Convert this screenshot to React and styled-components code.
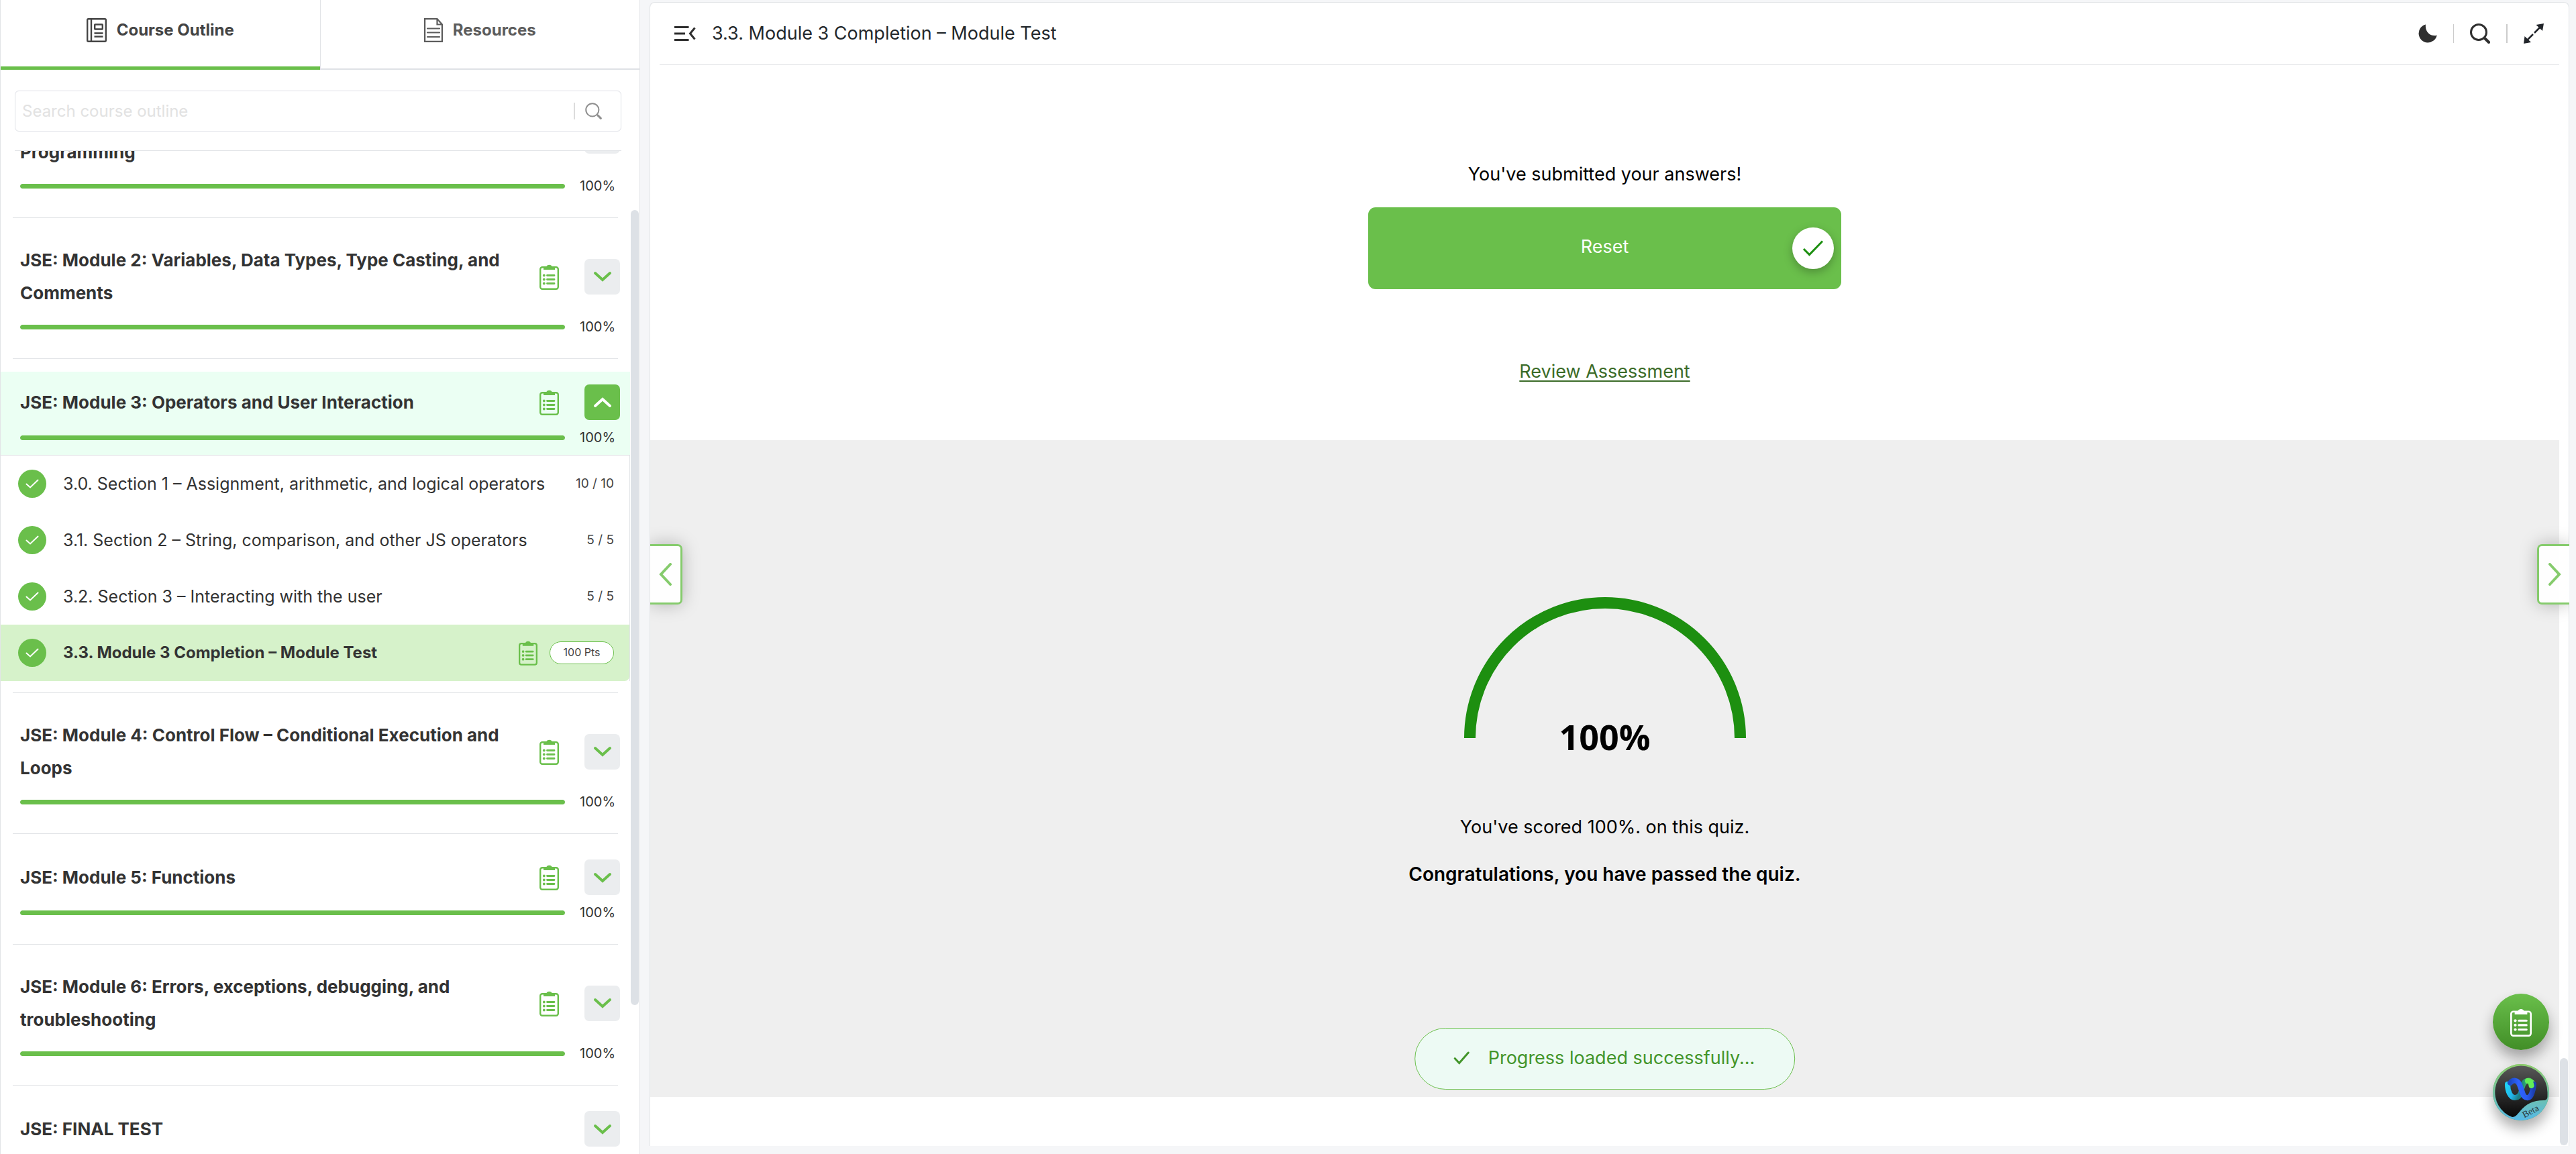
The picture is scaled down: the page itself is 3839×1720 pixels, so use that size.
import React, { useLayoutEffect, useRef } from 'react';
import styled, { createGlobalStyle } from 'styled-components';

const green = '#6abf4b';
const line = '#e2e4e7';

const GlobalStyle = createGlobalStyle`
  *, *::before, *::after { box-sizing: border-box; }
  body {
    margin: 0;
    background: #f5f6f8;
    color: #333333;
    font-family: Inter, "Liberation Sans", sans-serif;
    font-size: 24px;
  }
  button, input { font: inherit; color: inherit; }
  button { border: 0; padding: 0; background: none; cursor: pointer; }
  svg { display: block; flex: none; }
  h1, h2, p, ul { margin: 0; padding: 0; }
  ul { list-style: none; }
`;

const Layout = styled.div`
  display: flex;
  height: 100vh;
  overflow: hidden;
`;

/* ---------- Sidebar ---------- */

const Sidebar = styled.aside`
  flex: none;
  display: flex;
  flex-direction: column;
  width: 954px;
  background: #ffffff;
  border: solid ${line};
  border-width: 0 1px;
`;

const Tabs = styled.div`
  flex: none;
  display: flex;
  height: 104px;
`;

const Tab = styled.button`
  flex: 1;
  display: flex;
  align-items: center;
  justify-content: center;
  gap: 15px;
  padding-bottom: ${(p) => (p.$active ? 9 : 12)}px;
  border-bottom: ${(p) => (p.$active ? `5px solid ${green}` : '2px solid #dee1e6')};
  color: ${(p) => (p.$active ? '#444444' : '#5c5c5c')};
  font-weight: 700;
  line-height: 30px;

  & + & { border-left: 1px solid ${line}; }
`;

const SearchBox = styled.form`
  flex: none;
  display: flex;
  align-items: center;
  height: 61px;
  margin: 31px 27px 29px 21px;
  padding-right: 28px;
  border: 1px solid #dee0e6;
  border-radius: 6px;
`;

const SearchInput = styled.input`
  flex: 1;
  min-width: 0;
  height: 100%;
  padding: 0 10px;
  border: 0;
  outline: 0;
  background: transparent;

  &::placeholder { color: #e2e2e2; opacity: 1; }
`;

const Divider = styled.span`
  flex: none;
  width: ${(p) => p.$width || 2}px;
  height: ${(p) => p.$height || 28}px;
  background: ${(p) => p.$color || '#cccccc'};
`;

const SearchButton = styled.button`
  margin-left: 15px;
  color: #8f8f8f;
`;

const ListArea = styled.div`
  flex: 1;
  min-height: 0;
  display: flex;
  position: relative;

  &::before {
    content: "";
    position: absolute;
    top: -1px;
    left: 21px;
    right: 27px;
    border-top: 1px solid ${line};
  }
`;

const List = styled.ul`
  flex: 1;
  min-width: 0;
  overflow-y: auto;
  scrollbar-width: none;
  &::-webkit-scrollbar { display: none; }
`;

const Track = styled.div`
  flex: none;
  width: 14px;
  padding: ${(p) => p.$top}px 1px 0;
`;

const Thumb = styled.div`
  height: ${(p) => p.$height}px;
  border-radius: 6px;
  background: #dde1e6;
`;

const Module = styled.li`
  padding-top: 19px;

  &::after {
    content: "";
    display: block;
    margin: ${(p) => (p.$open ? 17 : 21)}px 18px 0;
    border-top: 1px solid ${line};
  }
`;

const ModuleHead = styled.div`
  padding: 19px 15px 9px 29px;
  background: ${(p) => (p.$open ? '#ebfff3' : 'transparent')};
  border-bottom: ${(p) => (p.$open ? `1px solid ${line}` : '0')};
`;

const TitleRow = styled.div`
  display: flex;
  align-items: center;
  min-height: 53px;
`;

const ModuleTitle = styled.h2`
  flex: 1;
  padding-right: 24px;
  font-size: 26px;
  font-weight: 700;
  line-height: 49px;
`;

const Toggle = styled.button`
  flex: none;
  display: grid;
  place-items: center;
  width: 53px;
  height: 53px;
  margin-left: 38px;
  border-radius: 7px;
  background: ${(p) => (p.$open ? green : '#ebedef')};
  color: ${(p) => (p.$open ? '#ffffff' : green)};
`;

const ProgressRow = styled.div`
  display: flex;
  align-items: center;
  gap: 22px;
  height: 34px;
  margin-top: 9px;
`;

const Bar = styled.div`
  flex: 1;
  height: 7px;
  border-radius: 4px;
  background: #e5e7ea;
  overflow: hidden;
`;

const BarFill = styled.div`
  height: 100%;
  border-radius: 4px;
  background: ${green};
`;

const Percent = styled.span`
  width: 60px;
  font-size: 20px;
  line-height: 34px;
`;

const Lessons = styled.ul`
  border-right: 1px solid ${line};
`;

const Lesson = styled.li`
  display: flex;
  align-items: center;
  height: 84px;
  padding: 0 23px 0 26px;
  background: ${(p) => (p.$active ? '#d6f2ca' : '#ffffff')};
  border-bottom-right-radius: ${(p) => (p.$active ? 7 : 0)}px;
  font-size: ${(p) => (p.$active ? 24 : 25)}px;
  font-weight: ${(p) => (p.$active ? 700 : 400)};
`;

const Done = styled.span`
  flex: none;
  display: grid;
  place-items: center;
  width: 42px;
  height: 42px;
  margin-right: 25px;
  border-radius: 50%;
  background: ${green};
  color: #ffffff;
`;

const LessonName = styled.span`
  flex: 1;
  line-height: 34px;
`;

const Count = styled.span`
  font-size: 19px;
  line-height: 34px;
  color: #444444;
`;

const Points = styled.span`
  width: 96px;
  height: 34px;
  margin-left: 18px;
  border: 1px solid ${green};
  border-radius: 17px;
  background: #ffffff;
  color: #444444;
  font-size: 16px;
  font-weight: 400;
  line-height: 31px;
  text-align: center;
`;

const Tint = styled.span`
  flex: none;
  color: ${green};
`;

/* ---------- Main ---------- */

const Card = styled.main`
  flex: 1;
  min-width: 0;
  display: flex;
  flex-direction: column;
  position: relative;
  margin: 3px 10px 12px 14px;
  border: 1px solid ${line};
  border-bottom: 0;
  border-radius: 8px 8px 0 0;
  background: #ffffff;
`;

const Header = styled.header`
  flex: none;
  display: flex;
  align-items: center;
  gap: 24px;
  height: 93px;
  margin: 0 14px;
  padding: 0 23px 0 22px;
  border-bottom: 1px solid ${line};
  color: #2f2f2f;
`;

const PageTitle = styled.h1`
  flex: 1;
  color: #23282c;
  font-size: 27px;
  font-weight: 400;
  line-height: 42px;
`;

const Body = styled.div`
  flex: 1;
  min-height: 0;
  display: flex;
`;

const Content = styled.div`
  flex: 1;
  min-width: 0;
  overflow: hidden;
  position: relative;
  color: #000000;
  font-size: 27px;
  line-height: 42px;
`;

const Submitted = styled.section`
  display: flex;
  flex-direction: column;
  align-items: center;
  padding: 142px 24px 81px;
`;

const ResetButton = styled.button`
  display: grid;
  grid-template-columns: 62px 1fr 62px;
  align-items: center;
  width: 705px;
  max-width: 100%;
  height: 122px;
  margin: 28px 0 102px;
  padding: 0 11px;
  border-radius: 11px;
  background: ${green};
  color: #ffffff;
`;

const ResetLabel = styled.span`
  grid-column: 2;
  padding-bottom: 4px;
`;

const ResetMark = styled.span`
  display: grid;
  place-items: center;
  width: 62px;
  height: 62px;
  border-radius: 50%;
  background: #ffffff;
  color: #1c8f10;
  box-shadow: 0 5px 14px rgba(0, 0, 0, 0.25);
`;

const ReviewLink = styled.a`
  color: #3b6b28;
  text-decoration: underline;
  text-decoration-thickness: 2px;
  text-underline-offset: 4px;
`;

const Result = styled.section`
  display: flex;
  flex-direction: column;
  align-items: center;
  gap: 28px;
  padding: 234px 24px 311px;
  background: #efefef;
`;

const Gauge = styled.div`
  display: grid;
  justify-items: center;
  align-items: end;
  margin-bottom: 48px;

  & > * { grid-area: 1 / 1; }
`;

const Score = styled.span`
  font-family: "Open Sans", "Noto Sans", sans-serif;
  font-size: 52px;
  font-weight: 700;
  line-height: 76px;
`;

const Verdict = styled.p`
  font-size: 28px;
  font-weight: 600;
`;

const Toast = styled.div`
  position: absolute;
  bottom: 84px;
  left: 50%;
  transform: translateX(-50%);
  display: flex;
  align-items: center;
  gap: 28px;
  height: 92px;
  padding: 0 59px 2px 57px;
  border: 1px solid ${green};
  border-radius: 46px;
  background: #edfaf4;
  color: #43952a;
  white-space: nowrap;
`;

const PageNav = styled.button`
  position: absolute;
  top: 50%;
  ${(p) => p.$side}: ${(p) => (p.$side === 'left' ? 0 : -1)}px;
  transform: translateY(-50%);
  display: grid;
  place-items: center;
  width: 48px;
  height: 90px;
  border: 3px solid #85cb6c;
  border-${(p) => p.$side}: 0;
  border-radius: ${(p) => (p.$side === 'left' ? '0 7px 7px 0' : '7px 0 0 7px')};
  background: rgba(255, 255, 255, 0.9);
  color: #85cb6c;
  box-shadow: 0 0 26px rgba(0, 0, 0, 0.25);
  clip-path: inset(${(p) => (p.$side === 'left' ? '-40px -40px -40px 0' : '-40px 0 -40px -40px')});
`;

const Floating = styled.div`
  position: absolute;
  right: 29px;
  bottom: 38px;
  display: flex;
  flex-direction: column;
  gap: 21px;
`;

const Fab = styled.button`
  display: grid;
  place-items: center;
  width: 84px;
  height: 84px;
  border-radius: 50%;
  background: linear-gradient(#6abf4b, #418e27);
  color: #ffffff;
  box-shadow: 0 12px 20px rgba(0, 0, 0, 0.32);
`;

const MainTrack = styled.div`
  flex: none;
  display: flex;
  flex-direction: column;
  justify-content: flex-end;
  width: 14px;
  padding: 1px;
`;

/* ---------- Icons ---------- */

const ClipboardIcon = ({ width = 29, height = 39 }) => (
  <svg width={width} height={height} viewBox="0 0 29 39" fill="none" stroke="currentColor" aria-hidden="true">
    <rect x="1.200" y="5.200" width="26.600" height="32.600" rx="3" strokeWidth="2.400" />
    <path d="M6 5h4.100a4.600 4.600 0 0 1 8.800 0H23v4H6z" fill="currentColor" stroke="none" />
    <path d="M11.500 17.500h10.500M11.500 23.500h10.500M11.500 29.500h10.500" strokeWidth="2.800" strokeLinecap="round" />
    <g fill="currentColor" stroke="none">
      <circle cx="6.800" cy="17.500" r="1.900" />
      <circle cx="6.800" cy="23.500" r="1.900" />
      <circle cx="6.800" cy="29.500" r="1.900" />
    </g>
  </svg>
);

const ChevronIcon = ({ up }) => (
  <svg width="28" height="18" viewBox="0 0 28 18" fill="none" stroke="currentColor" strokeWidth="4" strokeLinecap="round" aria-hidden="true">
    <path d={up ? 'M3 14 14 4l11 10' : 'M3 4l11 10L25 4'} />
  </svg>
);

const ArrowIcon = ({ left }) => (
  <svg width="20" height="34" viewBox="0 0 20 34" fill="none" stroke="currentColor" strokeWidth="4" strokeLinecap="round" aria-hidden="true">
    <path d={left ? 'M17 2 3 17l14 15' : 'M3 2l14 15L3 32'} />
  </svg>
);

const CheckIcon = ({ size = 20, stroke = 2 }) => (
  <svg width={size} height={size * 0.7} viewBox="0 0 20 14" fill="none" stroke="currentColor" strokeWidth={stroke} strokeLinecap="round" aria-hidden="true">
    <path d="M1.500 7.500 7 12.500 18.500 1.500" />
  </svg>
);

const ResetCheckIcon = () => (
  <svg width="32" height="24" viewBox="0 0 32 24" fill="none" stroke="currentColor" strokeWidth="3" aria-hidden="true">
    <path d="M2 13l8.500 8.500L30 1.500" />
  </svg>
);

const ToastCheckIcon = () => (
  <svg width="24" height="20" viewBox="0 0 24 20" fill="none" stroke="currentColor" strokeWidth="3" strokeLinecap="round" aria-hidden="true">
    <path d="M2 10.500 8.500 17.500 22 2" />
  </svg>
);

const OutlineIcon = () => (
  <svg width="30" height="36" viewBox="0 0 30 36" fill="none" stroke="currentColor" strokeWidth="2.400" aria-hidden="true">
    <rect x="1.200" y="1.200" width="27.600" height="33.600" rx="1.500" />
    <path d="M7 1v34" />
    <rect x="12.200" y="9.500" width="11.600" height="7" rx="0.500" />
    <path d="M11.500 22.500h13M11.500 27.500h13" />
  </svg>
);

const ResourcesIcon = () => (
  <svg width="28" height="36" viewBox="0 0 28 36" fill="none" stroke="currentColor" strokeWidth="2.200" aria-hidden="true">
    <path d="M1.100 1.100h18.400L26.900 9.500V34.900H1.100zM19.500 1v8.500H27" />
    <path d="M5 15.500h18M5 21.500h18M5 28h18" strokeLinecap="round" />
  </svg>
);

const SearchIcon = ({ size, stroke }) => (
  <svg width={size} height={size} viewBox="0 0 30 30" fill="none" stroke="currentColor" strokeWidth={stroke} strokeLinecap="round" aria-hidden="true">
    <circle cx="13" cy="13" r="11.500" />
    <path d="M21.500 21.500l2 2" />
    <path d="M23 23l5 5" strokeWidth={stroke + 1.2} />
  </svg>
);

const MenuIcon = () => (
  <svg width="32" height="22" viewBox="0 0 32 22" fill="none" stroke="currentColor" strokeWidth="3" aria-hidden="true">
    <path d="M0 1.500h21.500M0 11h16M0 20.500h21.500M30.500 2.500 23.500 11l7 8.500" />
  </svg>
);

const MoonIcon = () => (
  <svg width="28" height="28" viewBox="0 0 28 28" fill="currentColor" aria-hidden="true">
    <path d="M11 .5A13.700 13.700 0 1 0 27.700 16.500C19 19 9.500 12 11 .5z" />
  </svg>
);

const ExpandIcon = () => (
  <svg width="30" height="30" viewBox="0 0 30 30" fill="#22252a" aria-hidden="true">
    <path d="M30 0 28 11 18.500 2z M0 30 1.500 19 11 28z" />
    <path d="M25 5 16 14M14 16 5 25" stroke="#22252a" strokeWidth="2.500" />
  </svg>
);

const AssistantIcon = () => (
  <svg width="84" height="84" viewBox="0 0 84 84" aria-hidden="true">
    <defs>
      <linearGradient id="ring" x1="0" y1="0" x2="0" y2="1">
        <stop offset="0" stopColor="#8dcc6c" />
        <stop offset="0.6" stopColor="#6fc1ae" />
        <stop offset="1" stopColor="#55b8e8" />
      </linearGradient>
      <linearGradient id="dark" x1="0" y1="0" x2="0" y2="1">
        <stop offset="0" stopColor="#585858" />
        <stop offset="1" stopColor="#080808" />
      </linearGradient>
      <linearGradient id="cyan" x1="0" y1="0" x2="1" y2="0.4">
        <stop offset="0" stopColor="#1fd3f7" />
        <stop offset="0.55" stopColor="#22b4ea" />
        <stop offset="1" stopColor="#1c7f86" />
      </linearGradient>
      <linearGradient id="blue" x1="0" y1="0" x2="1" y2="0">
        <stop offset="0" stopColor="#1d49c4" />
        <stop offset="0.35" stopColor="#2f63ff" />
        <stop offset="0.7" stopColor="#2a5cf0" />
        <stop offset="1" stopColor="#1c3fae" />
      </linearGradient>
      <linearGradient id="lime" x1="0" y1="0" x2="1" y2="0">
        <stop offset="0" stopColor="#1d8a78" />
        <stop offset="1" stopColor="#62ee58" />
      </linearGradient>
    </defs>
    <circle cx="42" cy="42" r="42" fill="url(#ring)" />
    <path
      d="M42 2.500A39.500 39.500 0 0 1 81.500 42V48c0 4-2 6-6 6C60 54 50 59 40 71c-4 5-7 8-11 8A39.500 39.500 0 0 1 42 2.500z"
      fill="url(#dark)"
    />
    <g fill="none" strokeWidth="8" strokeLinecap="round">
      <path d="M44 34C46 24 56 21 60 30" stroke="url(#lime)" />
      <path d="M22 30C22 40 26 50 33 50C39 50 42 44 43 39" stroke="url(#cyan)" />
      <path d="M26 28C30 23 37 23 40 31L44 42C47 53 55 52 58 44C60 39 61 34 61 30" stroke="url(#blue)" />
      <path d="M52 25C55 25 57 28 57.500 32" stroke="#62ee58" />
    </g>
    <text x="56" y="75" fill="#2b3a3c" fontFamily='"Liberation Serif", serif' fontSize="14" textAnchor="middle" transform="rotate(-28 56 70)">
      Beta
    </text>
  </svg>
);

/* ---------- Data ---------- */

const modules = [
  { title: 'JSE: Module 1: Introduction to JavaScript and Computer Programming', quiz: true, progress: 100 },
  { title: 'JSE: Module 2: Variables, Data Types, Type Casting, and Comments', quiz: true, progress: 100 },
  {
    title: 'JSE: Module 3: Operators and User Interaction',
    quiz: true,
    progress: 100,
    lessons: [
      { name: '3.0. Section 1 – Assignment, arithmetic, and logical operators', count: '10 / 10' },
      { name: '3.1. Section 2 – String, comparison, and other JS operators', count: '5 / 5' },
      { name: '3.2. Section 3 – Interacting with the user', count: '5 / 5' },
      { name: '3.3. Module 3 Completion – Module Test', points: '100 Pts' },
    ],
  },
  { title: 'JSE: Module 4: Control Flow – Conditional Execution and Loops', quiz: true, progress: 100 },
  { title: 'JSE: Module 5: Functions', quiz: true, progress: 100 },
  { title: 'JSE: Module 6: Errors, exceptions, debugging, and troubleshooting', quiz: true, progress: 100 },
  { title: 'JSE: FINAL TEST', progress: 100 },
];

function ModuleItem({ module }) {
  const open = Boolean(module.lessons);
  return (
    <Module $open={open}>
      <ModuleHead $open={open}>
        <TitleRow>
          <ModuleTitle>{module.title}</ModuleTitle>
          {module.quiz && (
            <Tint>
              <ClipboardIcon />
            </Tint>
          )}
          <Toggle $open={open} aria-expanded={open} aria-label={`Toggle ${module.title}`}>
            <ChevronIcon up={open} />
          </Toggle>
        </TitleRow>
        <ProgressRow>
          <Bar>
            <BarFill style={{ width: `${module.progress}%` }} />
          </Bar>
          <Percent>{module.progress}%</Percent>
        </ProgressRow>
      </ModuleHead>
      {open && (
        <Lessons>
          {module.lessons.map((lesson) => (
            <Lesson key={lesson.name} $active={Boolean(lesson.points)}>
              <Done>
                <CheckIcon />
              </Done>
              <LessonName>{lesson.name}</LessonName>
              {lesson.count && <Count>{lesson.count}</Count>}
              {lesson.points && (
                <>
                  <Tint>
                    <ClipboardIcon width={28} height={38} />
                  </Tint>
                  <Points>{lesson.points}</Points>
                </>
              )}
            </Lesson>
          ))}
        </Lessons>
      )}
    </Module>
  );
}

export default function App() {
  const listRef = useRef(null);

  useLayoutEffect(() => {
    listRef.current.scrollTop = 110;
  }, []);

  return (
    <>
      <GlobalStyle />
      <Layout>
        <Sidebar>
          <Tabs>
            <Tab $active>
              <OutlineIcon />
              Course Outline
            </Tab>
            <Tab>
              <ResourcesIcon />
              Resources
            </Tab>
          </Tabs>
          <SearchBox onSubmit={(e) => e.preventDefault()}>
            <SearchInput type="text" aria-label="Search course outline" placeholder="Search course outline" />
            <Divider $width={2} $height={25} $color="#dcdcdc" />
            <SearchButton aria-label="Search">
              <SearchIcon size={25} stroke={2.4} />
            </SearchButton>
          </SearchBox>
          <ListArea>
            <List ref={listRef}>
              {modules.map((module) => (
                <ModuleItem key={module.title} module={module} />
              ))}
            </List>
            <Track $top={88}>
              <Thumb $height={1185} />
            </Track>
          </ListArea>
        </Sidebar>

        <Card>
          <Header>
            <button aria-label="Collapse outline">
              <MenuIcon />
            </button>
            <PageTitle>3.3. Module 3 Completion – Module Test</PageTitle>
            <button aria-label="Dark mode">
              <MoonIcon />
            </button>
            <Divider $width={1} />
            <button aria-label="Search page">
              <SearchIcon size={30} stroke={3} />
            </button>
            <Divider />
            <button aria-label="Full screen">
              <ExpandIcon />
            </button>
          </Header>
          <Body>
            <Content>
              <Submitted>
                <p>You've submitted your answers!</p>
                <ResetButton>
                  <ResetLabel>Reset</ResetLabel>
                  <ResetMark>
                    <ResetCheckIcon />
                  </ResetMark>
                </ResetButton>
                <ReviewLink href="#review">Review Assessment</ReviewLink>
              </Submitted>
              <Result>
                <Gauge>
                  <svg width="420" height="246" viewBox="0 0 420 246" fill="none" aria-hidden="true">
                    <path d="M8.500 210a201.500 201.500 0 0 1 403 0" stroke="#1d8f10" strokeWidth="17" />
                  </svg>
                  <Score>100%</Score>
                </Gauge>
                <p>You've scored 100%. on this quiz.</p>
                <Verdict>Congratulations, you have passed the quiz.</Verdict>
              </Result>
              <Toast role="status">
                <ToastCheckIcon />
                Progress loaded successfully...
              </Toast>
            </Content>
            <MainTrack>
              <Thumb $height={130} />
            </MainTrack>
          </Body>
          <PageNav $side="left" aria-label="Previous page">
            <ArrowIcon left />
          </PageNav>
          <PageNav $side="right" aria-label="Next page">
            <ArrowIcon />
          </PageNav>
          <Floating>
            <Fab aria-label="Assessments">
              <ClipboardIcon width={32} height={43} />
            </Fab>
            <Fab aria-label="Webex assistant">
              <AssistantIcon />
            </Fab>
          </Floating>
        </Card>
      </Layout>
    </>
  );
}
